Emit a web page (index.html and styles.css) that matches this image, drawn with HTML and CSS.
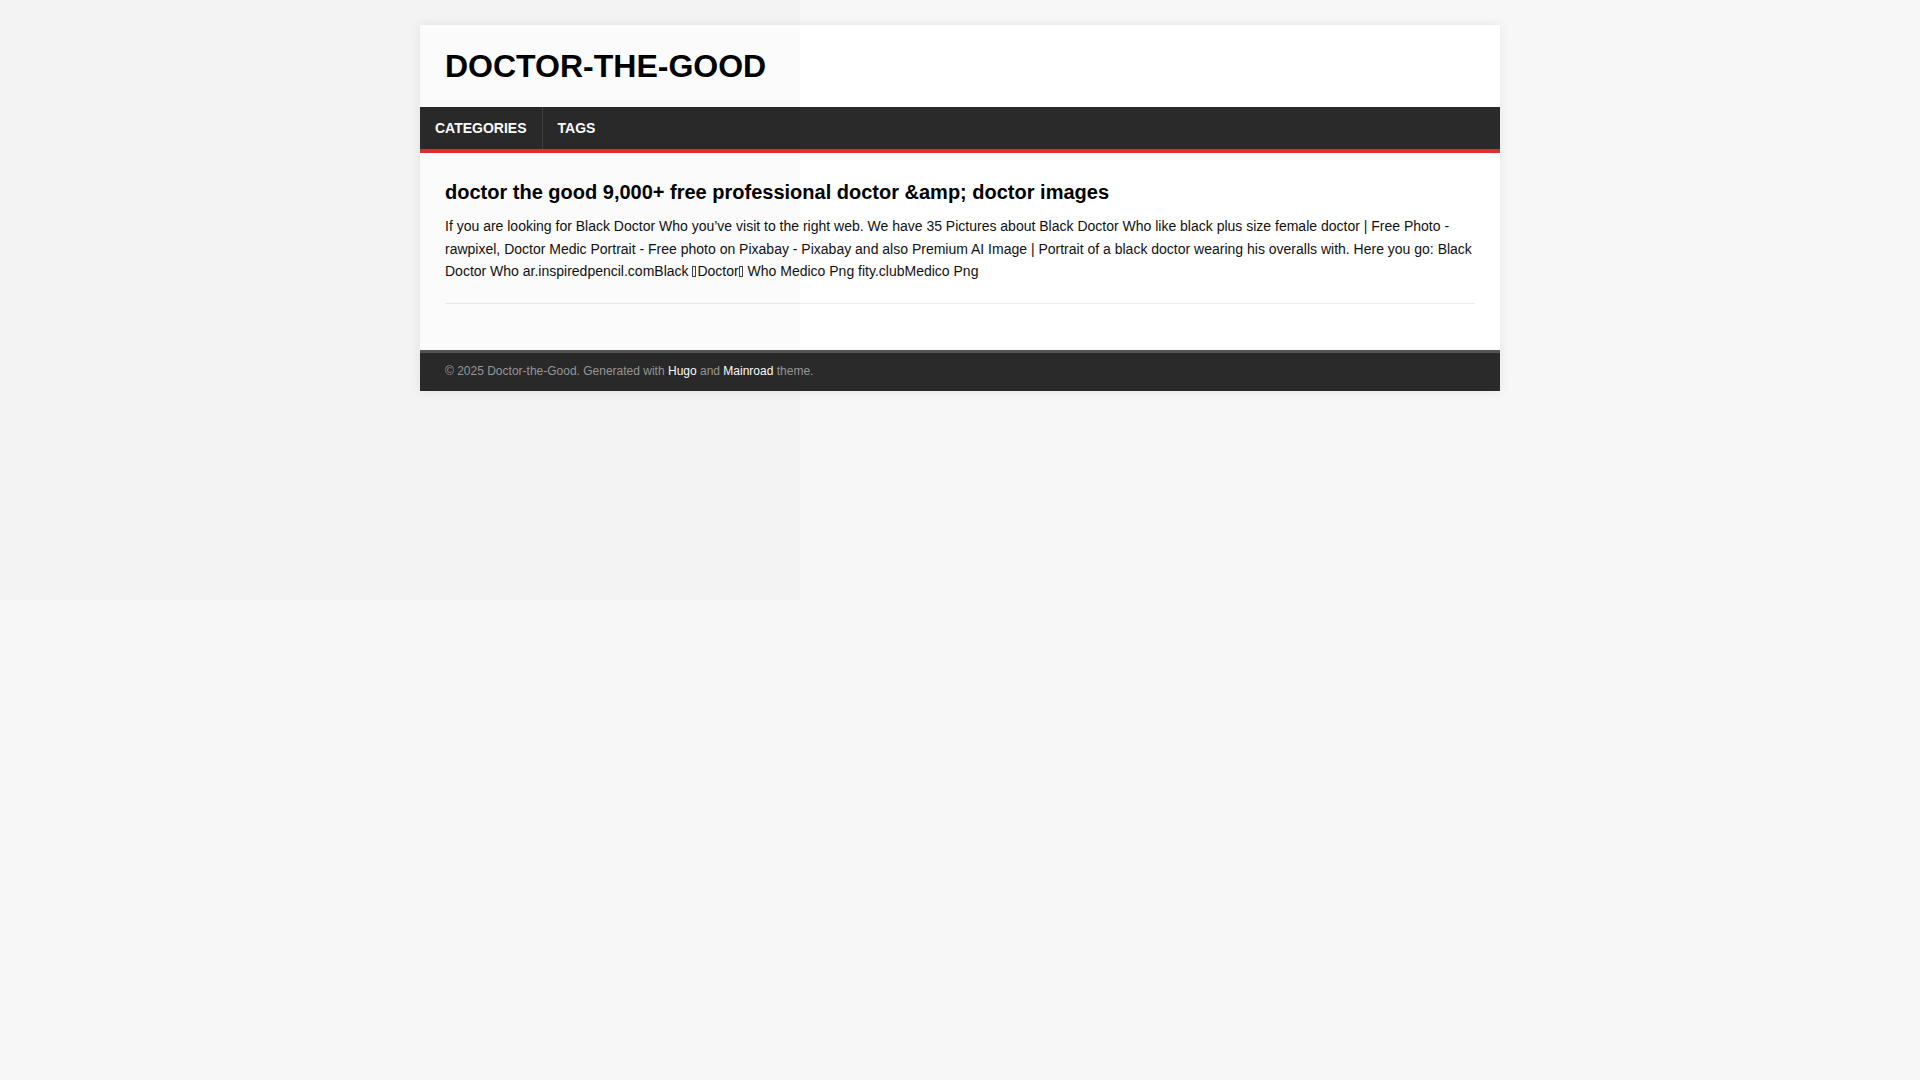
FILE: index.html
```html
<!DOCTYPE html>
<html lang="en">
<head>
<meta charset="utf-8">
<title>Doctor-the-Good</title>
<link rel="stylesheet" href="styles.css">
</head>
<body>
<div class="shade"></div>
<div class="wrapper">
  <header class="header">
    <a class="logo" href="#">DOCTOR-THE-GOOD</a>
  </header>
  <nav class="menu">
    <ul class="menu__list">
      <li class="menu__item"><a href="#">CATEGORIES</a></li>
      <li class="menu__item"><a href="#">TAGS</a></li>
    </ul>
  </nav>
  <main class="main">
    <article class="list__item">
      <h2 class="list__title">doctor the good 9,000+ free professional doctor &amp;amp; doctor images</h2>
      <p class="list__excerpt">If you are looking for Black Doctor Who you’ve visit to the right web. We have 35 Pictures about Black Doctor Who like black plus size female doctor | Free Photo - rawpixel, Doctor Medic Portrait - Free photo on Pixabay - Pixabay and also Premium AI Image | Portrait of a black doctor wearing his overalls with. Here you go: Black Doctor Who ar.inspiredpencil.comBlack <span class="notdef"></span>Doctor<span class="notdef"></span> Who Medico Png fity.clubMedico Png</p>
    </article>
  </main>
  <footer class="footer">
    <span>© 2025 Doctor-the-Good. Generated with <a href="#">Hugo</a> and <a href="#">Mainroad</a> theme.</span>
  </footer>
</div>
</body>
</html>
```
FILE: styles.css
```css
html, body {
  margin: 0;
  padding: 0;
}
body {
  background: #f7f7f7;
  font-family: "Liberation Sans", Arial, sans-serif;
  color: #000;
  min-height: 1080px;
  position: relative;
}
.shade {
  position: absolute;
  left: 0;
  top: 0;
  width: 800px;
  height: 600px;
  background: rgba(0, 0, 0, 0.015);
  pointer-events: none;
  z-index: 10;
}
.wrapper {
  width: 1080px;
  margin: 25px auto;
  background: #fff;
  box-shadow: 0 0 10px rgba(72, 72, 72, 0.1);
}
.header {
  padding: 25px 25px;
}
.logo {
  display: block;
  font-size: 32px;
  line-height: 32px;
  font-weight: 700;
  color: #000;
  text-decoration: none;
}
.menu {
  background: #2a2a2a;
  border-bottom: 4px solid #e22d30;
}
.menu__list {
  display: flex;
  list-style: none;
  margin: 0;
  padding: 0;
}
.menu__item {
  border-right: 1px solid rgba(255, 255, 255, 0.1);
}
.menu__item:last-child {
  border-right: 0;
}
.menu__item a {
  display: block;
  padding: 11px 15px;
  font-size: 14px;
  line-height: 20px;
  font-weight: 700;
  color: #fff;
  text-decoration: none;
}
.main {
  padding: 26px 25px 25px;
}
.list__item {
  padding-bottom: 20px;
  margin-bottom: 21px;
  border-bottom: 1px solid #ebebeb;
}
.list__title {
  margin: 0 0 10px;
  font-size: 20px;
  line-height: 26px;
  font-weight: 700;
  color: #000;
}
.list__excerpt {
  margin: 0;
  font-size: 14px;
  line-height: 22.6px;
  color: #111;
}
.notdef {
  display: inline-block;
  width: 2px;
  height: 9px;
  margin: 0 1px 0 0;
  border: 1px solid #444;
  vertical-align: -1px;
}
.footer {
  background: #2a2a2a;
  border-top: 3px solid #555;
  padding: 9px 25px 10px;
  font-size: 12px;
  line-height: 19px;
  color: #999;
}
.footer a {
  color: #fff;
  text-decoration: none;
}
```
